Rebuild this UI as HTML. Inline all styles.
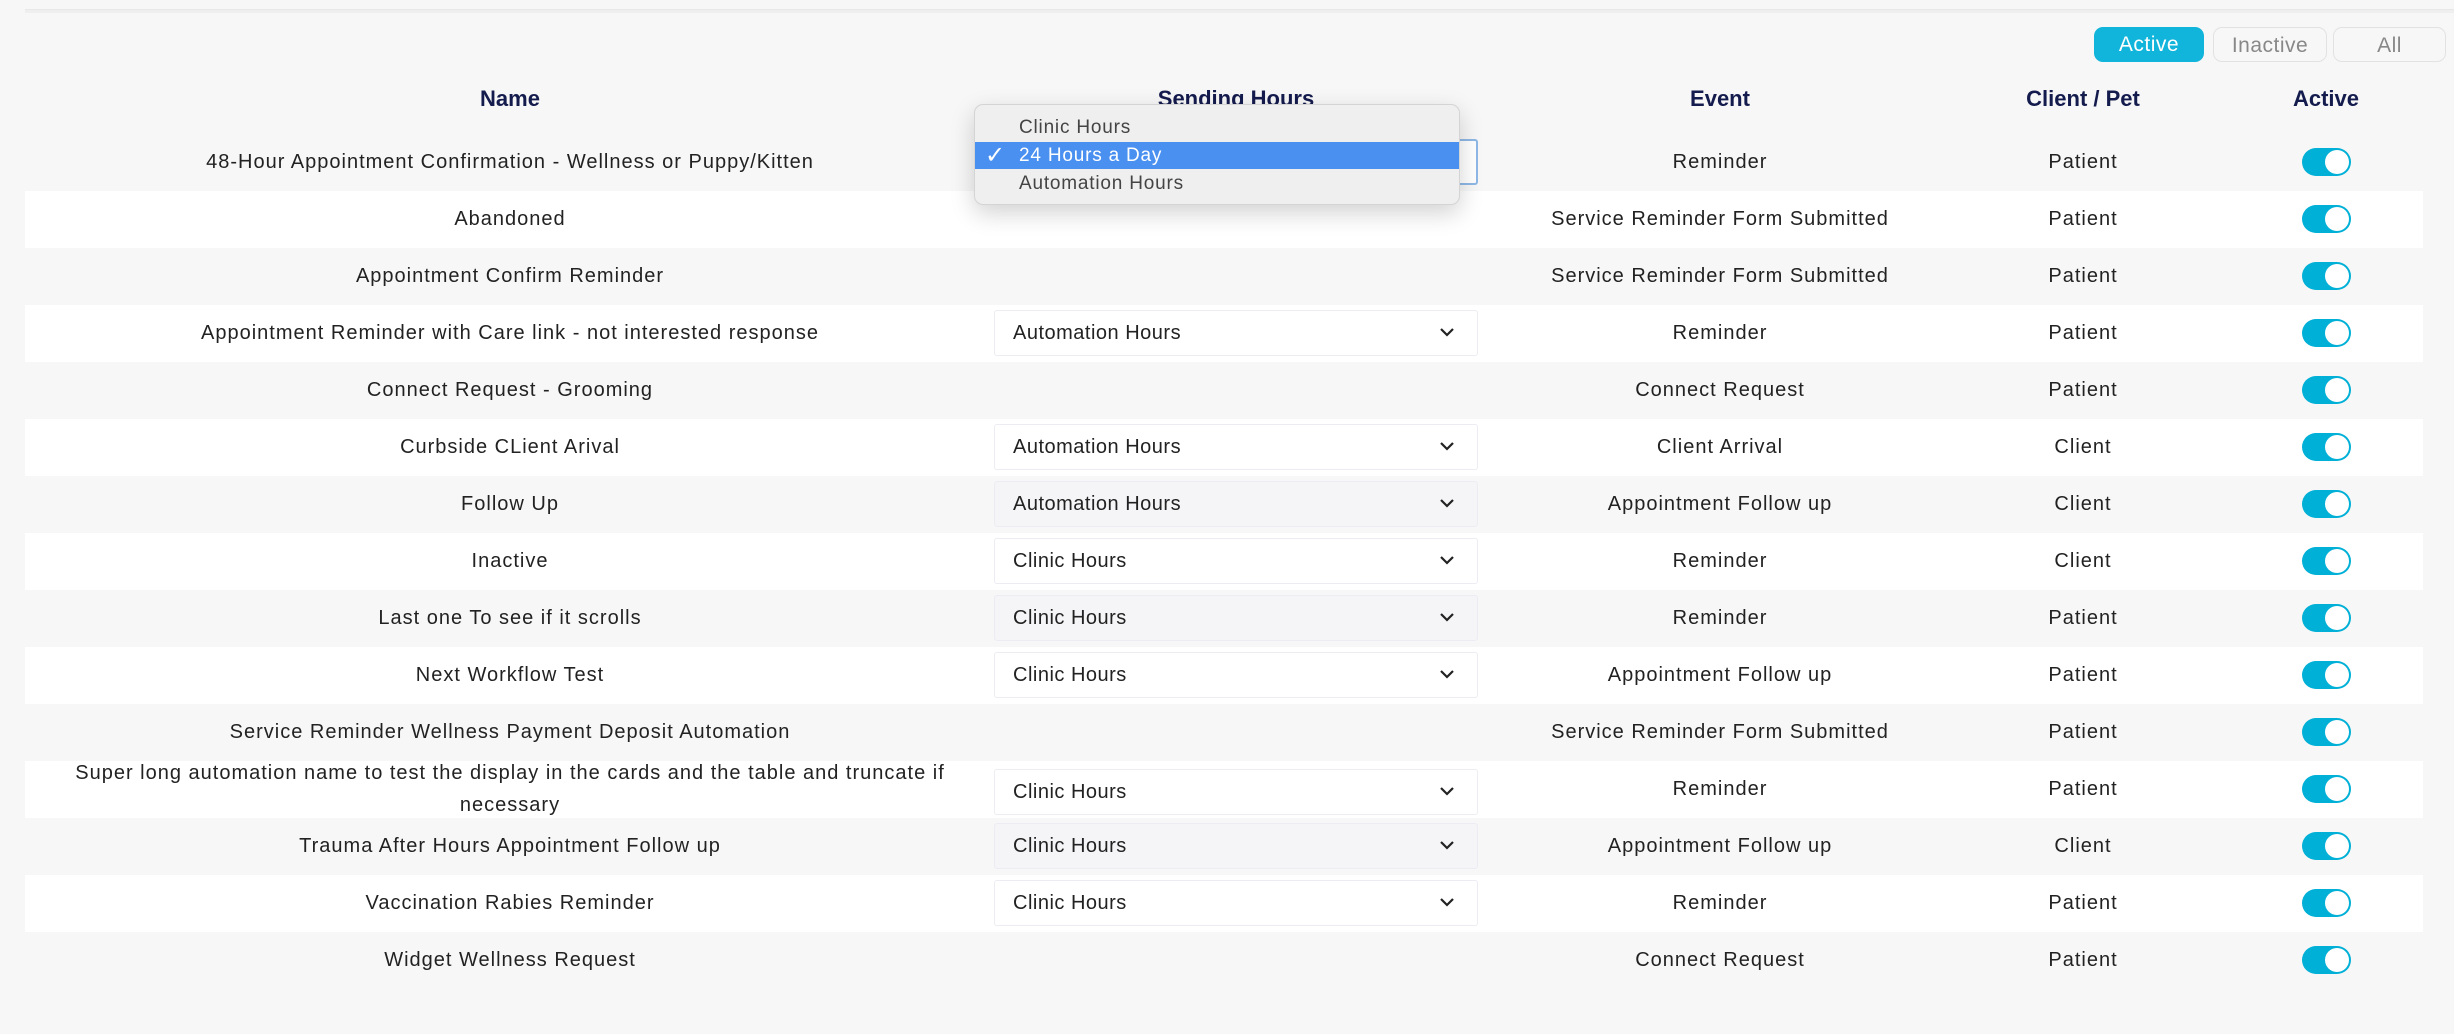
<!DOCTYPE html>
<html><head><meta charset="utf-8"><style>
*{box-sizing:border-box;margin:0;padding:0}
body{width:2454px;height:1034px;background:#f7f7f7;font-family:"Liberation Sans",sans-serif;color:#222;position:relative;overflow:hidden}
.line{position:absolute;left:25px;right:0;top:9px;height:4px;background:#efefef;border-top:1px solid #e8e8e8}
.btn{position:absolute;top:27px;height:35px;border-radius:9px;font-size:21px;text-align:center;line-height:35px;letter-spacing:0.5px}
.hd{position:absolute;top:86px;font-weight:bold;color:#141b4d;font-size:22px;text-align:center;transform:translateX(-50%);white-space:nowrap}
.row{position:absolute;left:25px;width:2398px;height:57px}
.row.w{background:#fff}
.c{position:absolute;top:0;height:57px;line-height:57px;font-size:20px;letter-spacing:1px;text-align:center;transform:translateX(-50%);white-space:nowrap}
.sel{position:absolute;left:969px;width:484px;top:5px;height:46px;border:1px solid #ececf2;border-radius:3px;font-size:20px;letter-spacing:0.5px;line-height:44px;padding-left:18px}
.row.w .sel{background:#fff}
.row:not(.w) .sel{background:#f5f5f7}
.sel svg{position:absolute;right:22px;top:16px}
.tg{position:absolute;left:2277px;top:14px;width:49px;height:28px;border-radius:14px;background:#00b0d6}
.tg::after{content:"";position:absolute;right:2px;top:2px;width:24px;height:24px;border-radius:50%;background:#fff}
.menu{position:absolute;left:974px;top:104px;width:486px;height:101px;background:#efefef;border:1px solid #d4d4d4;border-radius:9px;box-shadow:0 8px 24px rgba(0,0,0,.18);font-size:19px;letter-spacing:0.8px;color:#444}
.menu div{position:absolute;left:0;right:0;height:27px;line-height:27px;padding-left:44px}
</style></head><body>
<div class="line"></div>
<div class="btn" style="left:2094px;width:110px;background:#11b4da;color:#fff">Active</div>
<div class="btn" style="left:2213px;width:114px;border:1px solid #e2e2e2;color:#888">Inactive</div>
<div class="btn" style="left:2333px;width:113px;border:1px solid #e2e2e2;color:#888">All</div>

<div class="hd" style="left:510px">Name</div>
<div class="hd" style="left:1236px">Sending Hours</div>
<div class="hd" style="left:1720px">Event</div>
<div class="hd" style="left:2083px">Client / Pet</div>
<div class="hd" style="left:2326px">Active</div>

<div class="row" style="top:134px"><div class="c" style="left:485px">48-Hour Appointment Confirmation - Wellness or Puppy/Kitten</div><div class="sel" style="border:2px solid #8fb8e6;background:#fff"></div><div class="c" style="left:1695px">Reminder</div><div class="c" style="left:2058px">Patient</div><div class="tg"></div></div>
<div class="row w" style="top:191px"><div class="c" style="left:485px">Abandoned</div><div class="c" style="left:1695px">Service Reminder Form Submitted</div><div class="c" style="left:2058px">Patient</div><div class="tg"></div></div>
<div class="row" style="top:248px"><div class="c" style="left:485px">Appointment Confirm Reminder</div><div class="c" style="left:1695px">Service Reminder Form Submitted</div><div class="c" style="left:2058px">Patient</div><div class="tg"></div></div>
<div class="row w" style="top:305px"><div class="c" style="left:485px">Appointment Reminder with Care link - not interested response</div><div class="sel">Automation Hours<svg width="16" height="10"><path d="M2 2l6 6 6-6" stroke="#222" stroke-width="2.2" fill="none"/></svg></div><div class="c" style="left:1695px">Reminder</div><div class="c" style="left:2058px">Patient</div><div class="tg"></div></div>
<div class="row" style="top:362px"><div class="c" style="left:485px">Connect Request - Grooming</div><div class="c" style="left:1695px">Connect Request</div><div class="c" style="left:2058px">Patient</div><div class="tg"></div></div>
<div class="row w" style="top:419px"><div class="c" style="left:485px">Curbside CLient Arival</div><div class="sel">Automation Hours<svg width="16" height="10"><path d="M2 2l6 6 6-6" stroke="#222" stroke-width="2.2" fill="none"/></svg></div><div class="c" style="left:1695px">Client Arrival</div><div class="c" style="left:2058px">Client</div><div class="tg"></div></div>
<div class="row" style="top:476px"><div class="c" style="left:485px">Follow Up</div><div class="sel">Automation Hours<svg width="16" height="10"><path d="M2 2l6 6 6-6" stroke="#222" stroke-width="2.2" fill="none"/></svg></div><div class="c" style="left:1695px">Appointment Follow up</div><div class="c" style="left:2058px">Client</div><div class="tg"></div></div>
<div class="row w" style="top:533px"><div class="c" style="left:485px">Inactive</div><div class="sel">Clinic Hours<svg width="16" height="10"><path d="M2 2l6 6 6-6" stroke="#222" stroke-width="2.2" fill="none"/></svg></div><div class="c" style="left:1695px">Reminder</div><div class="c" style="left:2058px">Client</div><div class="tg"></div></div>
<div class="row" style="top:590px"><div class="c" style="left:485px">Last one To see if it scrolls</div><div class="sel">Clinic Hours<svg width="16" height="10"><path d="M2 2l6 6 6-6" stroke="#222" stroke-width="2.2" fill="none"/></svg></div><div class="c" style="left:1695px">Reminder</div><div class="c" style="left:2058px">Patient</div><div class="tg"></div></div>
<div class="row w" style="top:647px"><div class="c" style="left:485px">Next Workflow Test</div><div class="sel">Clinic Hours<svg width="16" height="10"><path d="M2 2l6 6 6-6" stroke="#222" stroke-width="2.2" fill="none"/></svg></div><div class="c" style="left:1695px">Appointment Follow up</div><div class="c" style="left:2058px">Patient</div><div class="tg"></div></div>
<div class="row" style="top:704px"><div class="c" style="left:485px">Service Reminder Wellness Payment Deposit Automation</div><div class="c" style="left:1695px">Service Reminder Form Submitted</div><div class="c" style="left:2058px">Patient</div><div class="tg"></div></div>
<div class="row w" style="top:761px"><div class="c" style="left:485px;line-height:32px;top:-4px">Super long automation name to test the display in the cards and the table and truncate if<br>necessary</div><div class="sel" style="top:8px">Clinic Hours<svg width="16" height="10"><path d="M2 2l6 6 6-6" stroke="#222" stroke-width="2.2" fill="none"/></svg></div><div class="c" style="left:1695px">Reminder</div><div class="c" style="left:2058px">Patient</div><div class="tg"></div></div>
<div class="row" style="top:818px"><div class="c" style="left:485px">Trauma After Hours Appointment Follow up</div><div class="sel">Clinic Hours<svg width="16" height="10"><path d="M2 2l6 6 6-6" stroke="#222" stroke-width="2.2" fill="none"/></svg></div><div class="c" style="left:1695px">Appointment Follow up</div><div class="c" style="left:2058px">Client</div><div class="tg"></div></div>
<div class="row w" style="top:875px"><div class="c" style="left:485px">Vaccination Rabies Reminder</div><div class="sel">Clinic Hours<svg width="16" height="10"><path d="M2 2l6 6 6-6" stroke="#222" stroke-width="2.2" fill="none"/></svg></div><div class="c" style="left:1695px">Reminder</div><div class="c" style="left:2058px">Patient</div><div class="tg"></div></div>
<div class="row" style="top:932px"><div class="c" style="left:485px">Widget Wellness Request</div><div class="c" style="left:1695px">Connect Request</div><div class="c" style="left:2058px">Patient</div><div class="tg"></div></div>

<div class="menu">
<div style="top:9px">Clinic Hours</div>
<div style="top:37px;background:#4a90f0;color:#fff"><span style="position:absolute;left:10px;font-size:24px">✓</span>24 Hours a Day</div>
<div style="top:65px">Automation Hours</div>
</div>
</body></html>
